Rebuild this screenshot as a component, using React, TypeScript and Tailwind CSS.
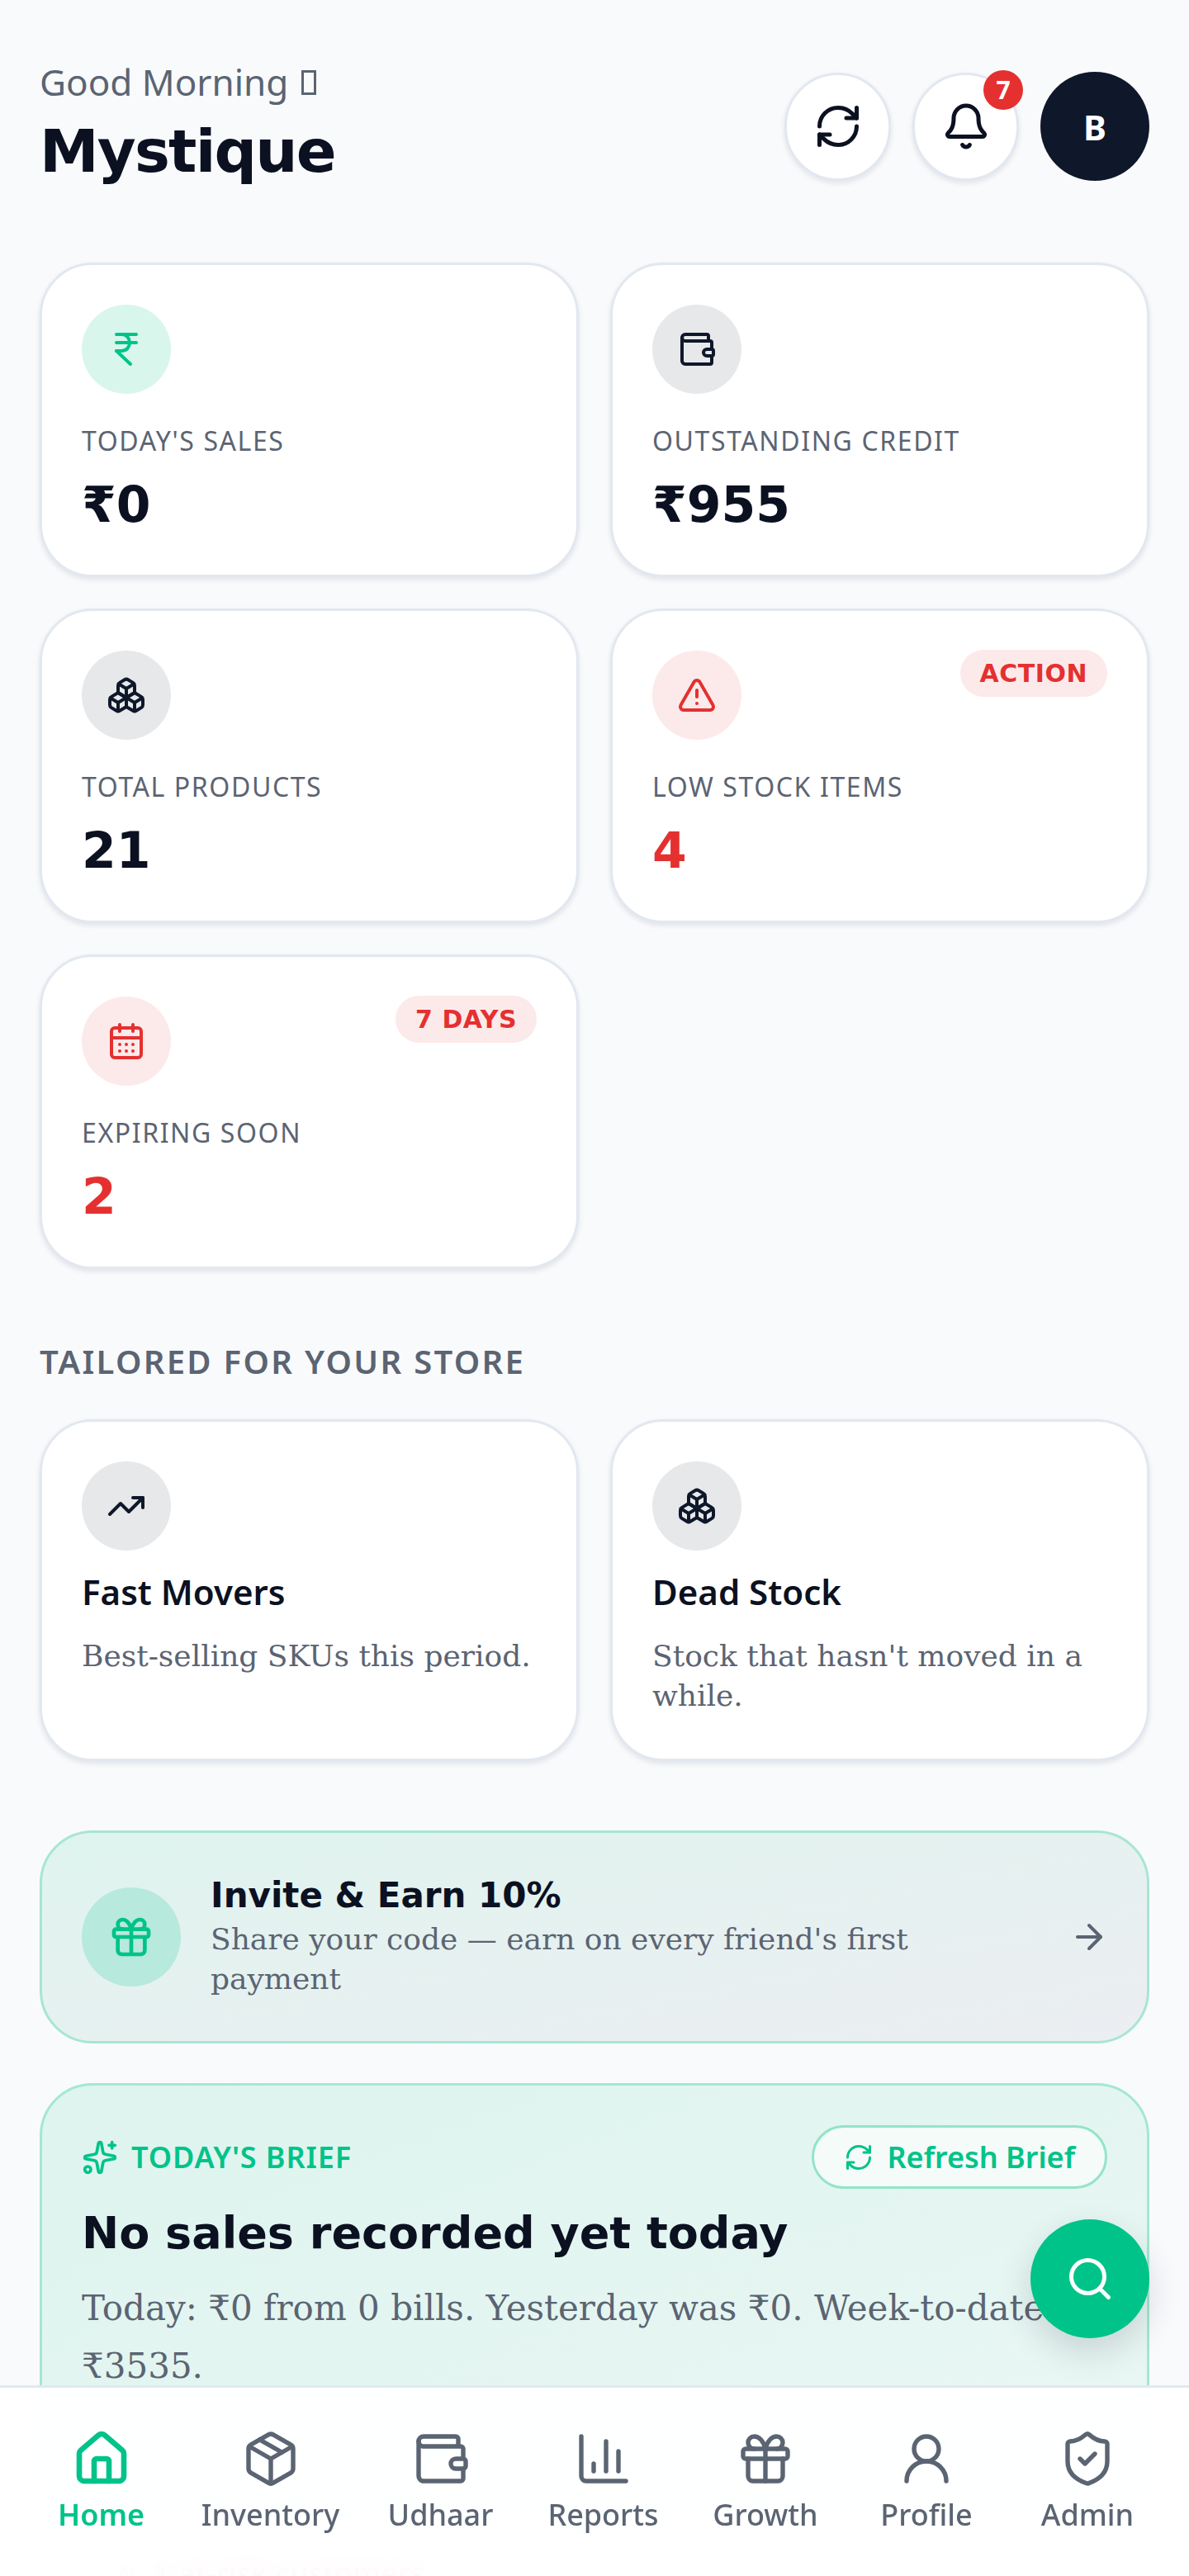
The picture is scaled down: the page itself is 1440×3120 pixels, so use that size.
import { Bell, Boxes, CalendarDays, ChartColumn, ArrowRight, Gift, House, IndianRupee, Package, RefreshCw, Search, ShieldCheck, Sparkles, TrendingUp, TriangleAlert, UserRound, Wallet } from "lucide-react";
import type { ReactNode } from "react";

const noto = "font-['Noto_Sans',sans-serif]";
const deja = "font-['DejaVu_Sans',sans-serif]";
const serif = "font-['DejaVu_Serif',serif]";

function Stat({ icon, tint, label, value, red, badge }: { icon: ReactNode; tint: string; label: string; value: string; red?: boolean; badge?: string }) {
  return (
    <div className="h-[381px] rounded-[64px] border-[3px] border-[#e2e8f0] bg-white p-12 shadow-[0_3px_6px_rgba(15,23,42,0.1)]">
      <div className="flex items-start justify-between">
        <div className={`flex h-[108px] w-[108px] items-center justify-center rounded-full ${tint}`}>{icon}</div>
        {badge && (
          <span className={`${deja} -mt-[1px] rounded-full bg-[#fceaea] px-6 py-1 text-[30px] leading-[49px] font-bold tracking-[0.5px] text-[#e53030]`}>{badge}</span>
        )}
      </div>
      <div className={`${noto} mt-[35px] text-[32px] leading-[44px] tracking-[1.6px] text-[#5b6472]`}>{label}</div>
      <div className={`${deja} mt-[19px] text-[60px] leading-[72px] font-bold ${red ? "text-[#e53030]" : "text-[#0b1121]"}`}>{value}</div>
    </div>
  );
}

function Tailored({ icon, title, desc }: { icon: ReactNode; title: string; desc: ReactNode }) {
  return (
    <div className="rounded-[64px] border-[3px] border-[#e2e8f0] bg-white px-12 pt-12 pb-[52px] shadow-[0_3px_6px_rgba(15,23,42,0.1)]">
      <div className="flex h-[108px] w-[108px] items-center justify-center rounded-full bg-[#e7e8ea]">{icon}</div>
      <div className={`${noto} mt-[22px] text-[42px] leading-[56px] font-semibold text-[#0b1121]`}>{title}</div>
      <div className={`${serif} mt-[26px] text-[36px] leading-[48px] text-[#5b6472]`}>{desc}</div>
    </div>
  );
}

function NavItem({ icon, label, w, active }: { icon: ReactNode; label: string; w: string; active?: boolean }) {
  return (
    <div className={`flex shrink-0 flex-col items-center gap-2 ${w} ${active ? "text-[#00c389]" : "text-[#5b6472]"}`}>
      {icon}
      <span className={`${noto} text-[36px] leading-[48px] ${active ? "font-semibold" : "font-medium"}`}>{label}</span>
    </div>
  );
}

export default function App() {
  return (
    <div className="relative h-[3120px] w-[1440px] overflow-hidden bg-[#f9fafc]">
      <main className="px-12 pt-[71px]">
        <header className="flex items-start justify-between">
          <div>
            <div className={`${noto} flex items-center text-[44px] leading-[56px] text-[#5b6472]`}>
              Good Morning
              <span className="mt-[2px] ml-4 inline-block h-[30px] w-[18px] border-[3px] border-[#5b6472]" />
            </div>
            <h1 className={`${deja} mt-3 text-[72px] leading-[88px] font-bold tracking-tight text-[#0b1121]`}>Mystique</h1>
          </div>
          <div className="mt-4 flex items-center gap-[26px]">
            <button className="flex h-[131px] w-[129px] items-center justify-center rounded-full border-[3px] border-[#e2e8f0] bg-white shadow-[0_3px_6px_rgba(15,23,42,0.1)]">
              <RefreshCw size={60} strokeWidth={2} className="text-[#0b1121]" />
            </button>
            <button className="relative flex h-[131px] w-[129px] items-center justify-center rounded-full border-[3px] border-[#e2e8f0] bg-white shadow-[0_3px_6px_rgba(15,23,42,0.1)]">
              <Bell size={60} strokeWidth={2} className="text-[#0b1121]" />
              <span className={`${noto} absolute -top-[6px] -right-[8px] flex h-12 w-12 items-center justify-center rounded-full bg-[#e53030] text-[30px] font-bold text-white`}>7</span>
            </button>
            <div className={`${noto} flex h-[132px] w-[132px] items-center justify-center rounded-full bg-[#0f172a] text-[42px] font-bold text-white`}>B</div>
          </div>
        </header>

        <section className="mt-[91px] grid grid-cols-2 gap-[38px]">
          <Stat icon={<IndianRupee size={48} strokeWidth={2} className="text-[#00c389]" />} tint="bg-[#d9f6ec]" label="TODAY'S SALES" value="₹0" />
          <Stat icon={<Wallet size={48} strokeWidth={2} className="text-[#0f172a]" />} tint="bg-[#e7e8ea]" label="OUTSTANDING CREDIT" value="₹955" />
          <Stat icon={<Boxes size={48} strokeWidth={2} className="text-[#0f172a]" />} tint="bg-[#e7e8ea]" label="TOTAL PRODUCTS" value="21" />
          <Stat icon={<TriangleAlert size={48} strokeWidth={2} className="text-[#e53030]" />} tint="bg-[#fceaea]" label="LOW STOCK ITEMS" value="4" red badge="ACTION" />
          <Stat icon={<CalendarDays size={48} strokeWidth={2} className="text-[#e53030]" />} tint="bg-[#fceaea]" label="EXPIRING SOON" value="2" red badge="7 DAYS" />
        </section>

        <h2 className={`${noto} mt-[84px] text-[40px] leading-[56px] font-semibold tracking-[2.3px] text-[#5b6472]`}>TAILORED FOR YOUR STORE</h2>

        <section className="mt-[42px] grid grid-cols-2 gap-[38px]">
          <Tailored icon={<TrendingUp size={48} strokeWidth={2} className="text-[#0f172a]" />} title="Fast Movers" desc="Best-selling SKUs this period." />
          <Tailored icon={<Boxes size={48} strokeWidth={2} className="text-[#0f172a]" />} title="Dead Stock" desc="Stock that hasn't moved in a while." />
        </section>

        <section className="mt-[84px] flex items-center gap-9 rounded-[64px] border-[3px] border-[#a7e6d2] bg-gradient-to-br from-[#dff4ee] to-[#eceef2] pt-[47px] pr-[46px] pb-[47px] pl-12">
          <div className="flex h-[120px] w-[120px] shrink-0 items-center justify-center rounded-full bg-[#b7e9dc]">
            <Gift size={56} strokeWidth={2} className="text-[#00c389]" />
          </div>
          <div className="min-w-0 flex-1 pb-1">
            <div className={`${deja} text-[42px] leading-[58px] font-bold text-[#0b1121]`}>Invite &amp; Earn 10%</div>
            <div className={`${serif} text-[36px] leading-[48px] text-[#5b6472]`}>Share your code — earn on every friend's first payment</div>
          </div>
          <ArrowRight size={48} strokeWidth={2} className="ml-[36px] shrink-0 text-[#5b6472]" />
        </section>

        <section className="mt-12 h-[520px] rounded-[64px] border-[3px] border-[#a3e8d1] bg-gradient-to-br from-[#def4ee] to-[#eaf7f4] px-12 pt-[48px]">
          <div className="flex items-center justify-between">
            <div className={`${noto} flex items-center gap-4 text-[36px] leading-[48px] font-semibold tracking-[0.9px] text-[#00c389]`}>
              <Sparkles size={44} strokeWidth={2} />
              TODAY'S BRIEF
            </div>
            <button className={`${noto} flex h-[77px] items-center gap-4 rounded-full border-[3px] border-[#93e4c9] bg-[#f4fbf9] px-9 text-[36px] font-semibold text-[#00c389]`}>
              <RefreshCw size={36} strokeWidth={2} />
              Refresh Brief
            </button>
          </div>
          <h3 className={`${deja} mt-[18px] text-[54px] leading-[72px] font-bold text-[#0b1121]`}>No sales recorded yet today</h3>
          <p className={`${serif} mt-5 text-[42px] leading-[70px] text-[#5b6472]`}>Today: ₹0 from 0 bills. Yesterday was ₹0. Week-to-date ₹3535.</p>
        </section>

        <div className={`${noto} mt-[50px] flex items-center gap-4 pl-[90px] text-[36px] leading-[48px] font-medium text-[#e53030]`}>
          <span>⚠</span>
          <span>1 at-risk customers</span>
        </div>
      </main>

      <button className="absolute top-[2688px] right-12 flex h-[144px] w-[144px] items-center justify-center rounded-full bg-[#00c389] text-white shadow-[0_16px_40px_rgba(15,23,42,0.15)]">
        <Search size={60} strokeWidth={2} />
      </button>

      <nav className="absolute right-0 bottom-0 left-0 flex h-[231px] border-t-[3px] border-[#e2e8f0] bg-white/95 pt-[50px] pl-[20px] backdrop-blur-md">
        <NavItem w="w-[205px]" active label="Home" icon={<House size={72} strokeWidth={2.2} />} />
        <NavItem w="w-[205px]" label="Inventory" icon={<Package size={72} strokeWidth={1.8} />} />
        <NavItem w="w-[207px]" label="Udhaar" icon={<Wallet size={72} strokeWidth={1.8} />} />
        <NavItem w="w-[187px]" label="Reports" icon={<ChartColumn size={72} strokeWidth={1.8} />} />
        <NavItem w="w-[206px]" label="Growth" icon={<Gift size={72} strokeWidth={1.8} />} />
        <NavItem w="w-[184px]" label="Profile" icon={<UserRound size={72} strokeWidth={1.8} />} />
        <NavItem w="w-[206px]" label="Admin" icon={<ShieldCheck size={72} strokeWidth={1.8} />} />
      </nav>
    </div>
  );
}
